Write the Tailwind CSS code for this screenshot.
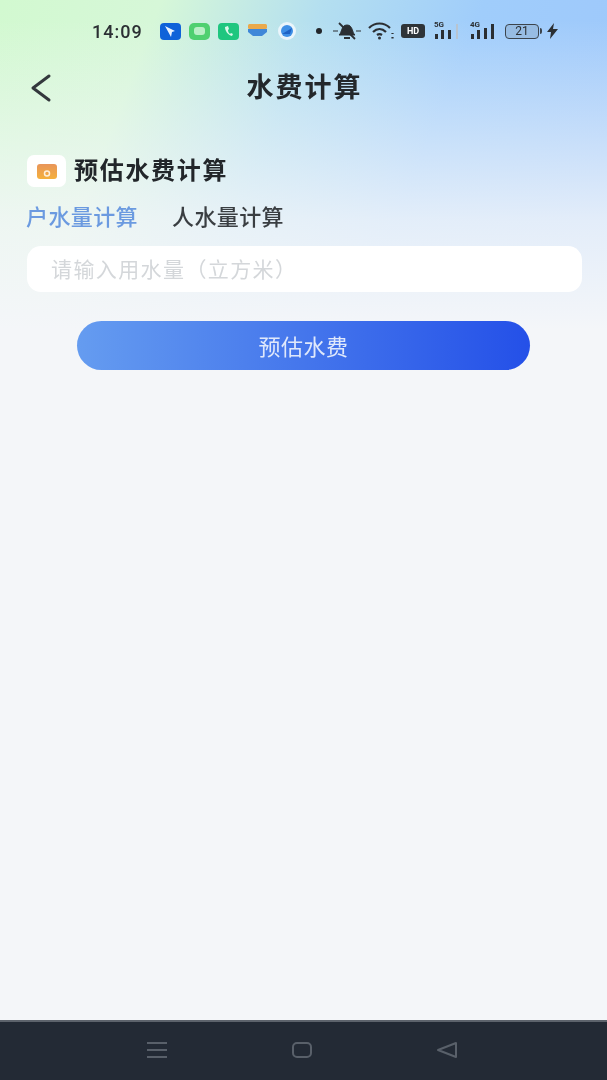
<!DOCTYPE html>
<html lang="zh-CN">
<head>
    <meta charset="UTF-8">
    <meta name="viewport" content="width=device-width, initial-scale=1.0">
    <title>水费计算</title>
    <script src="https://cdn.jsdelivr.net/npm/@tailwindcss/browser@4"></script>
</head>
<body class="bg-[#f4f6f9] font-['Noto_Sans_CJK_SC','Noto_Sans',sans-serif]">
    <div class="w-[607px] h-[1080px] flex flex-col overflow-hidden">
        <!-- page -->
        <main class="flex-1 flex flex-col blur-[0.5px] bg-[linear-gradient(180deg,#f4f6f900_20px,#f4f6f966_120px,#f4f6f9cc_220px,#f4f6f9_330px),linear-gradient(112deg,#d2f9d0_0px,#d6f7d8_150px,#b4dff0_300px,#a0cdfb_450px,#9ec8fb_620px)]">
            <!-- status bar -->
            <div class="h-[62px] flex items-center pl-[92px] text-[#2b2f33]">
                <span class="text-[18px] font-medium tracking-[1px] font-['Roboto',sans-serif] w-[68px]">14:09</span>
                <div class="flex items-center">
                    <svg width="21" height="17" viewBox="0 0 21 17" class="mr-[8px]"><rect width="21" height="17" rx="4" fill="#0f62d9"/><path d="M5 3l10 5-3 1-1 5z" fill="#e8f2ff"/></svg>
                    <svg width="21" height="17" viewBox="0 0 21 17" class="mr-[8px]"><rect width="21" height="17" rx="5" fill="#4fd070"/><rect x="5" y="4" width="11" height="8" rx="3" fill="#b9efc6"/></svg>
                    <svg width="21" height="17" viewBox="0 0 21 17" class="mr-[9px]"><rect width="21" height="17" rx="4" fill="#1fc67f"/><path d="M7 4c0 4 3 8 7 9l1-2-2-1-1 1c-1-1-2-2-2-4l1-1-1-3z" fill="#dcf8ea"/></svg>
                    <svg width="19" height="14" viewBox="0 0 19 14" class="mr-[10px]"><rect width="19" height="5" rx="1.500" fill="#eaa94a"/><path d="M0 5h19v3l-5 4H5L0 8z" fill="#3f87d8"/></svg>
                    <svg width="20" height="18" viewBox="0 0 20 18" class="mr-[19px]"><circle cx="10" cy="9" r="9" fill="#eaf5fb"/><circle cx="10" cy="9" r="6" fill="#3e8fe6"/><path d="M5 12l10-6-2 6z" fill="#1e62c4"/></svg>
                    <span class="w-[6px] h-[6px] rounded-full bg-[#22262a] mr-[10px]"></span>
                    <svg width="30" height="20" viewBox="0 0 30 20" class="mr-[6px]" fill="none" stroke="#2b2f33"><path d="M1 10h5M24 10h5" stroke-width="1.200"/><path d="M7 14c3-2 2-10 8-10s5 8 8 10z" fill="#2b2f33" stroke-width="1"/><path d="M7 2l16 16" stroke-width="1.800"/><path d="M12 17h6" stroke-width="2"/></svg>
                    <svg width="26" height="18" viewBox="0 0 26 18" class="mr-[7px]" fill="none" stroke="#2b2f33" stroke-width="2.200"><path d="M1 6c6-6 15-6 21 0M5 10c4-4 9-4 13 0M9 13c2-1.500 3-1.500 5 0"/><circle cx="11.500" cy="16" r="1.500" fill="#2b2f33" stroke="none"/><path d="M24.500 11v1M24.500 15v1.500"/></svg>
                    <span class="w-[24px] h-[14px] rounded-[3px] bg-[#2f3438] text-white text-[9px] leading-[14px] font-bold text-center font-['Roboto',sans-serif] mr-[9px]">HD</span>
                    <div class="relative mr-[11px]">
                        <span class="absolute left-0 top-[-2px] text-[8px] leading-[8px] font-bold font-['Roboto',sans-serif]">5G</span>
                        <svg width="25" height="16" viewBox="0 0 25 16" fill="#2b2f33"><rect x="1" y="11" width="3" height="5"/><rect x="7" y="7" width="3" height="9"/><rect x="14" y="7" width="3" height="9"/><rect x="22" y="1" width="2" height="15" fill="#b8c4d0"/></svg>
                    </div>
                    <div class="relative mr-[9px]">
                        <span class="absolute left-0 top-[-2px] text-[8px] leading-[8px] font-bold font-['Roboto',sans-serif]">4G</span>
                        <svg width="26" height="16" viewBox="0 0 26 16" fill="#2b2f33"><rect x="1" y="11" width="3" height="5"/><rect x="7" y="7" width="3" height="9"/><rect x="14" y="5" width="3" height="11"/><rect x="21" y="1" width="3" height="15"/></svg>
                    </div>
                    <div class="w-[34px] h-[15px] border border-[#3c444c] rounded-[4px] bg-[#8fb0d4]/60 text-[12px] leading-[13px] text-center font-['Roboto',sans-serif] text-[#2b2f33] mr-[1px]">21</div>
                    <span class="w-[2px] h-[6px] bg-[#3c444c] rounded-r-sm mr-[5px]"></span>
                    <svg width="11" height="16" viewBox="0 0 11 16" fill="#2b2f33"><path d="M7 0L0 9h4l-1 7 8-10H6z"/></svg>
                </div>
            </div>

            <!-- nav -->
            <header class="relative h-[52px] flex items-center justify-center">
                <svg width="24" height="32" viewBox="0 0 24 32" fill="none" stroke="#33383c" stroke-width="3" stroke-linecap="round" stroke-linejoin="round" class="absolute left-[30px] top-[10px]"><path d="M19 4L3 16l16 12"/></svg>
                <h1 class="text-[27px] font-bold text-[#23272b] tracking-[2px] pl-[2px] leading-[52px] mt-[-4px]">水费计算</h1>
            </header>

            <!-- section title -->
            <div class="flex items-center gap-[8px] mt-[39px] ml-[27px]">
                <div class="w-[39px] h-[32px] rounded-[7px] bg-white flex items-center justify-center">
                    <svg width="20" height="15" viewBox="0 0 20 15"><defs><linearGradient id="g" x1="0" y1="0" x2="0" y2="1"><stop offset="0" stop-color="#e8955a"/><stop offset="1" stop-color="#f5b03c"/></linearGradient></defs><rect width="20" height="15" rx="3" fill="url(#g)"/><circle cx="10" cy="9.500" r="2.500" fill="none" stroke="#fdf0dc" stroke-width="1.500"/></svg>
                </div>
                <h2 class="text-[24px] leading-[32px] font-bold text-[#22262a] tracking-[1.700px] pb-[4px]">预估水费计算</h2>
            </div>

            <!-- tabs -->
            <div class="flex mt-[10px] ml-[26px] text-[22px] leading-[32px] tracking-[0.400px] font-medium">
                <span class="text-[#6b9ae0] w-[146px]">户水量计算</span>
                <span class="text-[#3a3e42]">人水量计算</span>
            </div>

            <!-- input -->
            <div class="ml-[27px] mr-[25px] mt-[15px] h-[46px] rounded-[14px] bg-white flex items-center pl-[24px] text-[21px] tracking-[1.400px] text-[#d4d7da]">请输入用水量（立方米）</div>

            <!-- button -->
            <button class="mx-[77px] mt-[29px] h-[49px] rounded-full bg-[linear-gradient(90deg,#659cf0,#2450e8)] text-[#dfe8fb] text-[22px] tracking-[0.500px]">预估水费</button>
        </main>

        <!-- nav bar -->
        <nav class="h-[60px] shrink-0 bg-[#232a35] border-t-2 border-[#5d636c] flex items-center pb-[2px] pl-[146px]">
            <svg width="22" height="18" viewBox="0 0 22 18" stroke="#59606a" stroke-width="2" class="mr-[123px]"><path d="M1 2h20M1 9h20M1 16h20"/></svg>
            <svg width="22" height="18" viewBox="0 0 22 18" fill="none" stroke="#59606a" stroke-width="2" class="mr-[123px]"><rect x="2" y="2" width="18" height="14" rx="4"/></svg>
            <svg width="22" height="18" viewBox="0 0 22 18" fill="none" stroke="#59606a" stroke-width="2" stroke-linejoin="round"><path d="M20 2v14L2 9z"/></svg>
        </nav>
    </div>
</body>
</html>
